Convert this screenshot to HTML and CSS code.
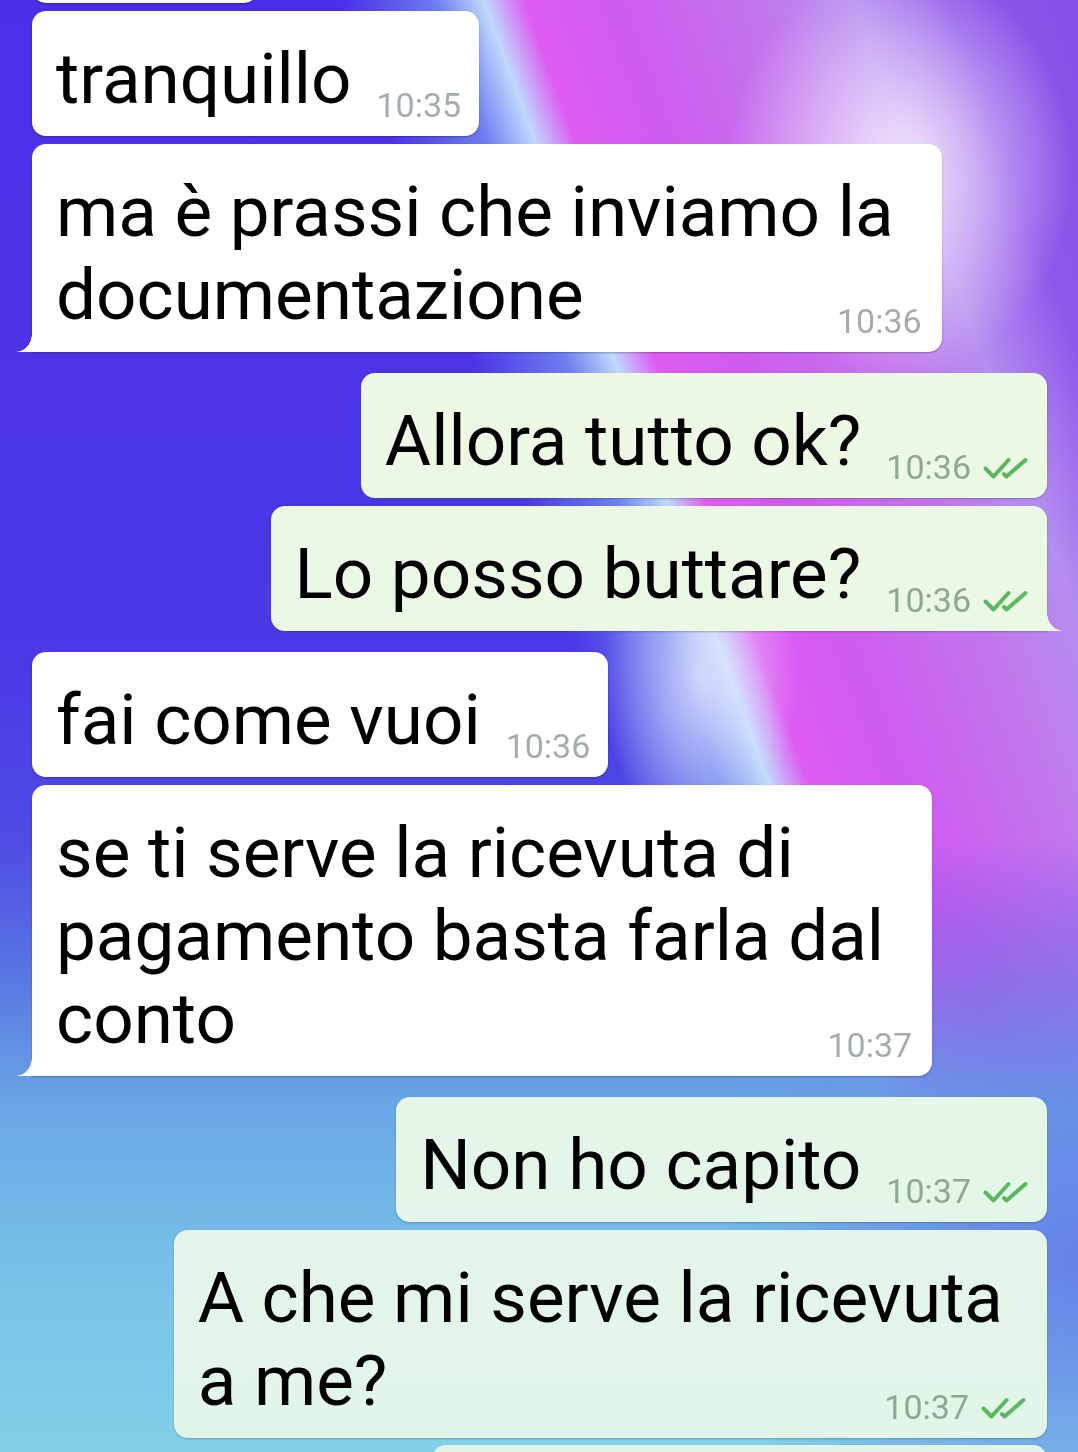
FILE: index.html
```html
<!DOCTYPE html>
<html lang="it">
<head>
    <meta charset="UTF-8">
    <meta name="viewport" content="width=device-width, initial-scale=1.0">
    <title>Chat</title>
    <link rel="stylesheet" href="styles.css">
</head>
<body>
    <div class="chat">
        <div class="bubble in partial"></div>

        <div class="bubble in">tranquillo<span class="meta">10:35</span></div>
        <div class="bubble in multi tail">ma è prassi che inviamo la<br>documentazione<span class="meta">10:36</span></div>

        <div class="bubble out group-start">Allora tutto ok?<span class="meta">10:36<svg class="ticks" viewBox="0 0 46 26"><path d="M2.5 13.5l8 8L25.5 5"/><path d="M21 19l2.5 2.5L42.5 5"/></svg></span></div>
        <div class="bubble out tail">Lo posso buttare?<span class="meta">10:36<svg class="ticks" viewBox="0 0 46 26"><path d="M2.5 13.5l8 8L25.5 5"/><path d="M21 19l2.5 2.5L42.5 5"/></svg></span></div>

        <div class="bubble in group-start">fai come vuoi<span class="meta">10:36</span></div>
        <div class="bubble in multi tail">se ti serve la ricevuta di<br>pagamento basta farla dal<br>conto<span class="meta">10:37</span></div>

        <div class="bubble out group-start">Non ho capito<span class="meta">10:37<svg class="ticks" viewBox="0 0 46 26"><path d="M2.5 13.5l8 8L25.5 5"/><path d="M21 19l2.5 2.5L42.5 5"/></svg></span></div>
        <div class="bubble out multi">A che mi serve la ricevuta<br>a me?<span class="meta">10:37<svg class="ticks" viewBox="0 0 46 26"><path d="M2.5 13.5l8 8L25.5 5"/><path d="M21 19l2.5 2.5L42.5 5"/></svg></span></div>
        <div class="bubble out partial wide"></div>
    </div>
</body>
</html>
```

FILE: styles.css
```css
:root {
    --in-bg: #ffffff;
    --out-top: #f1fae3;
    --out-bottom: #e1f5e9;
    --in-time: #a3adb1;
    --out-time: #8fa890;
    --tick: #5cb860;
}
html, body { margin: 0; padding: 0; }
body {
    width: 1078px; height: 1452px; overflow: hidden; position: relative;
    font-family: Roboto, 'Noto Sans', sans-serif; color: #000;
    background:
        radial-gradient(ellipse 520px 480px at 1078px 1260px, rgba(98, 118, 232, 0.85), rgba(98, 118, 232, 0) 70%),
        linear-gradient(to bottom, #4a30e8 0%, #4b38e6 45%, #4f4ce4 58%, #5a7ae2 68%, #6aa6e6 76%, #78c2e8 88%, #82d0e8 100%);
}
/* diagonal magenta band of the wallpaper */
body::before {
    content: ''; position: fixed; inset: 0; z-index: -1;
    background:
        radial-gradient(ellipse 230px 280px at 900px 170px, rgba(255, 246, 255, 0.85), rgba(255, 246, 255, 0) 75%),
        radial-gradient(ellipse 130px 220px at 700px 680px, rgba(238, 236, 255, 0.7), rgba(238, 236, 255, 0) 75%),
        linear-gradient(70deg, rgba(90, 70, 230, 0) 54%, rgba(140, 190, 248, 0.55) 60%, rgba(205, 235, 255, 0.9) 63%, rgba(222, 92, 242, 1) 65.5%, #cf5bef 71%, #c276ed 80%, #b48ef0 86%, #9058ea 92%, #8450e8 100%);
    -webkit-mask-image: linear-gradient(to bottom, #000 58%, rgba(0, 0, 0, 0) 76%);
    mask-image: linear-gradient(to bottom, #000 58%, rgba(0, 0, 0, 0) 76%);
}
.chat { display: flex; flex-direction: column; gap: 8px; margin-top: -120px; }
.bubble {
    position: relative; max-width: 1000px;
    padding: 26px 18px 16px 24px; border-radius: 14px;
    font-size: 71px; line-height: 83px; white-space: nowrap;
    box-shadow: 0 1px 2px rgba(0, 0, 0, 0.28);
}
.bubble.in { align-self: flex-start; margin-left: 32px; background: var(--in-bg); }
.bubble.out {
    align-self: flex-end; margin-right: 31px;
    background: linear-gradient(to bottom, var(--out-top), var(--out-bottom)) fixed;
    box-shadow: 0 1px 2px rgba(40, 70, 60, 0.35);
}
.bubble.group-start { margin-top: 13px; }
.bubble.multi { padding-right: 44px; }
.bubble.in.multi { padding-right: 48px; }
.bubble.partial { height: 123px; padding: 0; width: 226px; box-sizing: border-box; }
.bubble.partial.wide { width: 615px; margin-top: -1px; }

.meta {
    float: right; margin: 54px 0 0 25px;
    font-size: 34px; line-height: 28px; color: var(--in-time);
}
.bubble.multi .meta { margin-right: -24px; }
.bubble.in.multi .meta { margin-right: -28px; }
.bubble.out .meta { color: var(--out-time); }
.ticks {
    width: 46px; height: 26px; margin-left: 12px; vertical-align: -2px;
    fill: none; stroke: var(--tick); stroke-width: 4; stroke-linecap: round; stroke-linejoin: round;
}

/* bubble tails */
.bubble.tail.in { border-bottom-left-radius: 0; }
.bubble.tail.out { border-bottom-right-radius: 0; }
.bubble.tail::after { content: ''; position: absolute; bottom: 0; width: 16px; height: 18px; }
.bubble.tail.in::after {
    left: -16px; background: var(--in-bg);
    -webkit-mask-image: radial-gradient(ellipse 16px 18px at 0 0, transparent 97%, #000 100%);
    mask-image: radial-gradient(ellipse 16px 18px at 0 0, transparent 97%, #000 100%);
}
.bubble.tail.out::after {
    right: -16px; background: linear-gradient(to bottom, var(--out-top), var(--out-bottom)) fixed;
    -webkit-mask-image: radial-gradient(ellipse 16px 18px at 100% 0, transparent 97%, #000 100%);
    mask-image: radial-gradient(ellipse 16px 18px at 100% 0, transparent 97%, #000 100%);
}
```
